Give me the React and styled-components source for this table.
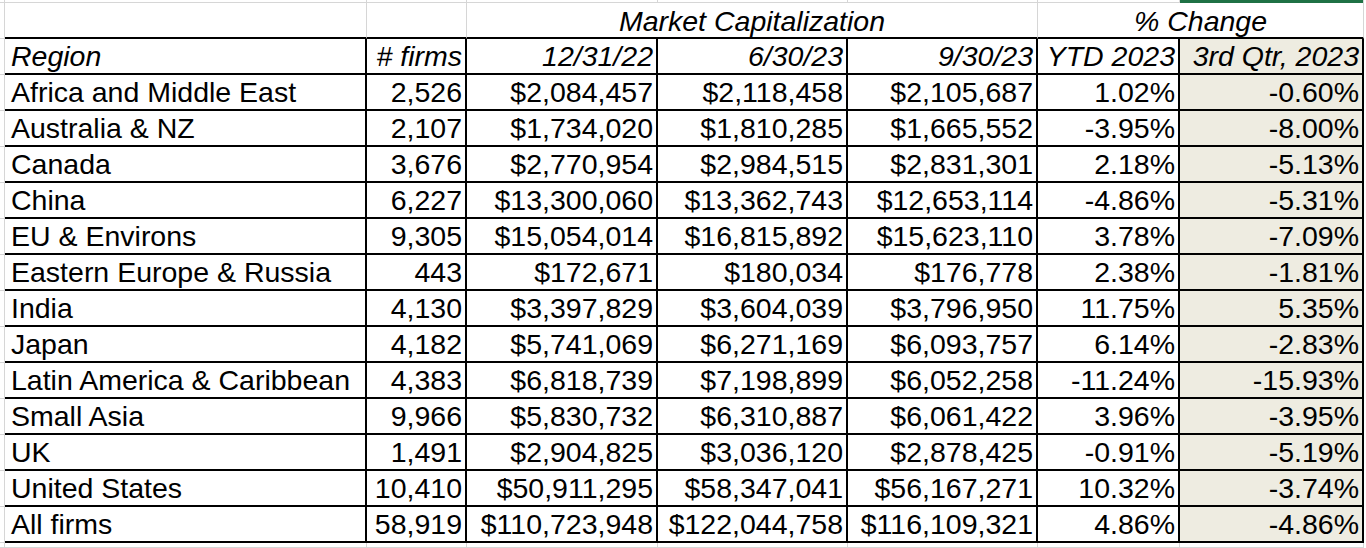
import React from "react";
import styled, { createGlobalStyle } from "styled-components";

const GRID = "#d6d6d6";
const LINE = "#000";
const SHADE = "#eeece1";

// widths include each cell's right border
const COLS = [5, 362, 100, 191, 190, 190, 142, 184];

const rows = [
  ["Africa and Middle East", "2,526", "$2,084,457", "$2,118,458", "$2,105,687", "1.02%", "-0.60%"],
  ["Australia & NZ", "2,107", "$1,734,020", "$1,810,285", "$1,665,552", "-3.95%", "-8.00%"],
  ["Canada", "3,676", "$2,770,954", "$2,984,515", "$2,831,301", "2.18%", "-5.13%"],
  ["China", "6,227", "$13,300,060", "$13,362,743", "$12,653,114", "-4.86%", "-5.31%"],
  ["EU & Environs", "9,305", "$15,054,014", "$16,815,892", "$15,623,110", "3.78%", "-7.09%"],
  ["Eastern Europe & Russia", "443", "$172,671", "$180,034", "$176,778", "2.38%", "-1.81%"],
  ["India", "4,130", "$3,397,829", "$3,604,039", "$3,796,950", "11.75%", "5.35%"],
  ["Japan", "4,182", "$5,741,069", "$6,271,169", "$6,093,757", "6.14%", "-2.83%"],
  ["Latin America & Caribbean", "4,383", "$6,818,739", "$7,198,899", "$6,052,258", "-11.24%", "-15.93%"],
  ["Small Asia", "9,966", "$5,830,732", "$6,310,887", "$6,061,422", "3.96%", "-3.95%"],
  ["UK", "1,491", "$2,904,825", "$3,036,120", "$2,878,425", "-0.91%", "-5.19%"],
  ["United States", "10,410", "$50,911,295", "$58,347,041", "$56,167,271", "10.32%", "-3.74%"],
  ["All firms", "58,919", "$110,723,948", "$122,044,758", "$116,109,321", "4.86%", "-4.86%"],
];

const headers = ["Region", "# firms", "12/31/22", "6/30/23", "9/30/23", "YTD 2023", "3rd Qtr, 2023"];

export default function App() {
  return (
    <>
      <GlobalStyle />
      <Sheet>
        {/* sliver of the row above the table */}
        <Gridline />
        {COLS.slice(1).map((w, i) => (
          <Gridline key={"top" + i} $active={i === COLS.length - 2} />
        ))}
        <Filler />

        {/* title row */}
        <Gutter />
        <TitleCell />
        <TitleCell />
        <TitleCell $span={3}>Market Capitalization</TitleCell>
        <TitleCell $span={2}>% Change</TitleCell>
        <Filler />

        {/* column headers */}
        <Gutter />
        {headers.map((h, i) => (
          <Cell key={h} $italic $align={i === 0 ? "left" : "right"} $shaded={i === 6}>
            {h}
          </Cell>
        ))}
        <Filler />

        {rows.map((r) => (
          <React.Fragment key={r[0]}>
            <Gutter />
            {r.map((v, i) => (
              <Cell key={i} $align={i === 0 ? "left" : "right"} $shaded={i === 6}>
                {v}
              </Cell>
            ))}
            <Filler />
          </React.Fragment>
        ))}

        {/* row below the table */}
        <Gridline />
        {COLS.slice(1).map((w, i) => (
          <Gridline key={"bot" + i} />
        ))}
        <Filler />
      </Sheet>
    </>
  );
}

const GlobalStyle = createGlobalStyle`
  html, body {
    margin: 0;
    background: #ffffff;
  }
  body {
    font-family: "Liberation Sans", Arial, Helvetica, sans-serif;
    color: #000;
    overflow: hidden;
  }
`;

const Sheet = styled.div`
  display: grid;
  grid-template-columns: ${COLS.map((w) => w + "px").join(" ")} 1fr;
  grid-template-rows: 3px repeat(15, 36px) 5px;
  width: 1366px;
  height: 548px;
`;

const Gridline = styled.div`
  box-sizing: border-box;
  border-right: 1px solid ${GRID};
  border-bottom: ${({ $active }) => ($active ? "none" : `1px solid ${GRID}`)};
  background: ${({ $active }) => ($active ? "#1f7145" : "transparent")};
`;

const Gutter = styled.div`
  box-sizing: border-box;
  border-right: 1px solid ${GRID};
  border-bottom: 1px solid ${GRID};
`;

const Filler = styled.div``;

const TitleCell = styled.div`
  box-sizing: border-box;
  grid-column: span ${({ $span }) => $span || 1};
  border-right: 1px solid ${GRID};
  border-bottom: 2px solid ${LINE};
  padding-top: 1px;
  font-size: 28.5px;
  font-style: italic;
  line-height: 34px;
  text-align: center;
  white-space: nowrap;
`;

const Cell = styled.div`
  box-sizing: border-box;
  border-right: 2px solid ${LINE};
  border-bottom: 2px solid ${LINE};
  background: ${({ $shaded }) => ($shaded ? SHADE : "#ffffff")};
  padding: ${({ $align }) => ($align === "left" ? "1px 0 0 6px" : "1px 3px 0 0")};
  font-size: 28.5px;
  font-style: ${({ $italic }) => ($italic ? "italic" : "normal")};
  line-height: 33px;
  text-align: ${({ $align }) => $align};
  white-space: nowrap;
`;
